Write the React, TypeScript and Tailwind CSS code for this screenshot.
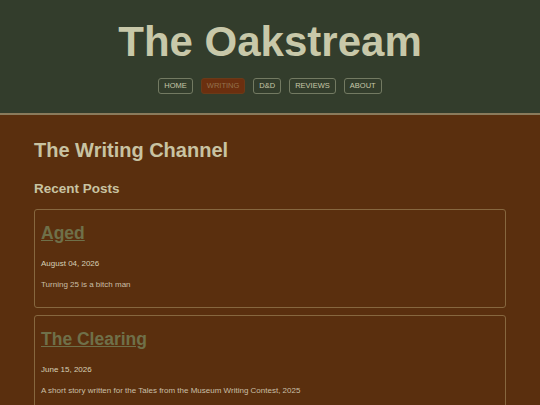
import React from 'react';

const navItems = ['HOME', 'WRITING', 'D&D', 'REVIEWS', 'ABOUT'];

const posts = [
  { title: 'Aged', date: 'August 04, 2026', blurb: 'Turning 25 is a bitch man' },
  {
    title: 'The Clearing',
    date: 'June 15, 2026',
    blurb: 'A short story written for the Tales from the Museum Writing Contest, 2025',
  },
];

export default function App() {
  return (
    <div className="min-h-[405px] bg-[#5a2f0e] font-['Liberation_Sans',Arial,sans-serif] text-[#c9c6a8]">
      <header className="bg-[#333d2c] border-b-2 border-[#8a7b5c] pt-[18px] h-[115px]">
        <h1 className="text-center text-[42px] leading-[48px] font-bold text-[#c8c8a9]">The Oakstream</h1>
        <nav className="flex justify-center gap-2 mt-[12px]">
          {navItems.map((item) => (
            <a
              key={item}
              href="#"
              className={
                item === 'WRITING'
                  ? 'px-[5px] h-4 flex items-center text-[7.5px] rounded-[3px] border border-[#6b3a18] bg-[#6b2f0f] text-[#94714c]'
                  : 'px-[5px] h-4 flex items-center text-[7.5px] rounded-[3px] border border-[#737a62] text-[#c8c8a9]'
              }
            >
              {item}
            </a>
          ))}
        </nav>
      </header>

      <main className="px-[34px] pt-[23px]">
        <h2 className="text-[20px] leading-[24px] font-bold text-[#c8c3a2]">The Writing Channel</h2>
        <h3 className="mt-[19px] text-[13.5px] leading-[16px] font-bold text-[#c8c3a2]">Recent Posts</h3>
        <div className="mt-[12px] flex flex-col gap-[7px]">
          {posts.map((p) => (
            <div key={p.title} className="border border-[#86673f] rounded-[3px] px-[6px] pt-[13px] pb-[17px]">
              <a href="#" className="block text-[17.5px] leading-[21px] font-bold underline text-[#6f7049] w-fit">
                {p.title}
              </a>
              <p className="mt-[15px] text-[8px] leading-[10px] text-[#d6cfb6]">{p.date}</p>
              <p className="mt-[11px] text-[8px] leading-[10px] text-[#c9bfa6]">{p.blurb}</p>
            </div>
          ))}
        </div>
      </main>
    </div>
  );
}
